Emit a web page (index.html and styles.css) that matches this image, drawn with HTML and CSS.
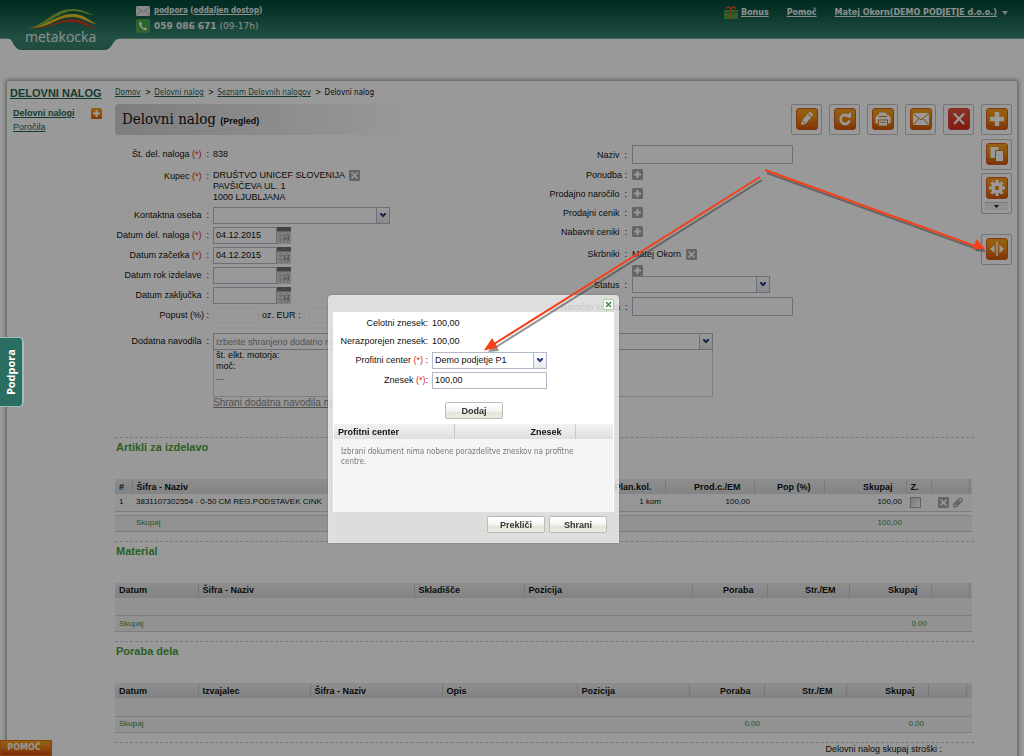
FILE: index.html
```html
<!DOCTYPE html>
<html lang="sl">
<head>
<meta charset="utf-8">
<title>Metakocka - Delovni nalog</title>
<meta name="viewport" content="width=device-width, initial-scale=1">
<link rel="stylesheet" href="styles.css">
</head>
<body>
<svg class="defs" aria-hidden="true">
  <defs>
    <linearGradient id="orange" x1="0" y1="0" x2="0" y2="1"><stop offset="0" stop-color="#f7a51c"/><stop offset=".5" stop-color="#f08a14"/><stop offset="1" stop-color="#d2560c"/></linearGradient>
    <linearGradient id="red" x1="0" y1="0" x2="0" y2="1"><stop offset="0" stop-color="#e85438"/><stop offset="1" stop-color="#d92e1c"/></linearGradient>
    <linearGradient id="tab" x1="0" y1="0" x2="0" y2="1"><stop offset="0" stop-color="#3b8672"/><stop offset="1" stop-color="#36806c"/></linearGradient>
    <symbol id="tile" viewBox="0 0 22 22"><rect x=".5" y=".5" width="21" height="21" rx="2.5" fill="url(#orange)" stroke="#dd5a1e"/></symbol>
    <symbol id="plus-s" viewBox="0 0 11 11"><rect width="11" height="11" rx="1.5" fill="#a8a8a8"/><path d="M5.500 2v7M2 5.500h7" stroke="#fff" stroke-width="2.200"/></symbol>
    <symbol id="cross-s" viewBox="0 0 11 11"><rect width="11" height="11" rx="1" fill="#a8a8a8"/><path d="M2.500 2.500l6 6M8.500 2.500l-6 6" stroke="#fff" stroke-width="1.600"/></symbol>
    <symbol id="caret" viewBox="0 0 8 6"><path d="M1 0.500l1.500 0 1.500 1.500 1.500-1.500H7v1.500L4 5 1 2z" fill="#2c3f80"/></symbol>
    <symbol id="cal" viewBox="0 0 14 17"><rect width="14" height="17" fill="#d4d4d4"/><rect width="14" height="4" fill="#6f7472"/><path d="M0 4.500h14" stroke="#aaa"/><path d="M1 8.500h12M1 12.500h12M3.500 6v10M10.500 6v10" stroke="#b8bcba"/><path d="M7.500 8v6M7.500 11.500h4M11.500 8v6" stroke="#8f9392"/></symbol>
  </defs>
</svg>

<div class="app">
  <header class="top">
    <a class="logo" href="#" aria-label="metakocka">
      <svg class="logo-art" viewBox="0 0 120 52" aria-hidden="true">
        <path d="M6 38c6 1 6 4 8 7s4 5 8 5h82c4 0 6-2 8-5s3-6 9-7z" fill="url(#tab)"/>
        <path d="M26 28C43 28 52 9 72 9c12 0 17 5 23 6-8 0-12-4-22-4C56 12 46 28 26 28z" fill="#86b43c"/>
        <path d="M26 28c17 1 30-14 46-14 13 0 17 7 25 10-10-1-14-7-25-7-16 0-25 13-46 11z" fill="#efc91f"/>
        <path d="M26 28c20 2 32-9 46-9 12 0 17 7 25 10-10-1-15-7-26-7-15 0-27 9-45 6z" fill="#c63d24"/>
      </svg>
      <span class="logo-name">metakocka</span>
    </a>
    <div class="contact">
      <svg viewBox="0 0 14 10" width="14" height="10" aria-hidden="true"><rect width="14" height="10" rx="1" fill="#e6e8e7"/><path d="M0 1l7 5 7-5M0 9.500l5-5M14 9.500l-5-5" fill="none" stroke="#aab0ae"/></svg>
      <span><a href="#">podpora</a> (<a href="#">oddaljen dostop</a>)</span>
      <svg viewBox="0 0 14 14" width="14" height="14" aria-hidden="true"><rect width="14" height="14" rx="2" fill="#4ea64a"/><path d="M4 2.500C2.500 4 3 7 5.500 9s4.500 3 6 1.500L9.500 8.300 8 9.300C6.800 8.600 5.800 7.600 5.200 6.200L6.300 5z" fill="#fff"/></svg>
      <span class="phone"><b>059 086 671</b> <span class="hours">(09-17h)</span></span>
    </div>
    <nav class="account">
      <a class="gift" href="#"><svg viewBox="0 0 14 14" width="14" height="14" aria-hidden="true"><rect x="0" y="4" width="14" height="9" fill="#4f9e48"/><path d="M0 6.500h14" stroke="#3a7d38"/><path d="M7 4v9" stroke="#d4512e" stroke-width="2"/><path d="M7 4C5-1 2 1 3 3M7 4c2-5 5-3 4-1" fill="none" stroke="#d4512e" stroke-width="1.500"/></svg><span>Bonus</span></a>
      <a href="#"><span>Pomoč</span></a>
      <a href="#"><span>Matej Okorn(DEMO PODJETJE d.o.o.)</span><svg viewBox="0 0 6 4" width="6" height="4" aria-hidden="true"><path d="M0 0h6L3 4z" fill="#c9d6d2"/></svg></a>
    </nav>
  </header>

  <div class="panel">
    <aside class="side">
      <a class="side-title" href="#">DELOVNI NALOG</a>
      <div class="side-row"><a href="#"><b>Delovni nalogi</b></a>
        <button class="bare" aria-label="Dodaj nalog"><svg viewBox="0 0 11 11" width="11" height="11"><rect width="11" height="11" rx="1.500" fill="url(#orange)"/><path d="M5.500 2v7M2 5.500h7" stroke="#fff" stroke-width="2"/></svg></button></div>
      <div class="side-row"><a href="#">Poročila</a></div>
    </aside>

    <main class="main">
      <nav class="crumbs"><a href="#">Domov</a> &gt; <a href="#">Delovni nalog</a> &gt; <a href="#">Seznam Delovnih nalogov</a> &gt; <span>Delovni nalog</span></nav>
      <div class="title-row">
        <h1>Delovni nalog <small>(Pregled)</small></h1>
        <div class="tools">
          <button class="tool" aria-label="Uredi"><svg viewBox="0 0 22 22"><use href="#tile"/><path d="M5 17l1.200-4.800L13 4.500q1-1 2.200 0l1.300 1.200q1 1 0 2L9.800 15.800z" fill="#fff"/><path d="M12 6l3.500 3.300M6.500 12.500l3 3" stroke="#d9761c"/></svg></button>
          <button class="tool" aria-label="Osveži"><svg viewBox="0 0 22 22"><use href="#tile"/><path d="M14.500 8.200A4.600 4.600 0 1 0 15.600 12.500" fill="none" stroke="#fff" stroke-width="2.600"/><path d="M11 8.500L17 10V4z" fill="#fff"/></svg></button>
          <button class="tool" aria-label="Natisni"><svg viewBox="0 0 22 22"><use href="#tile"/><path d="M7 8V4.500h6l2 2V8z" fill="#fff"/><path d="M3.500 9.500l2-2.500h11l2 2.500v6h-15z" fill="#fff"/><path d="M7 8.500h8" stroke="#dc7518"/><rect x="6.500" y="12" width="9" height="6" fill="#fff" stroke="#dc7518"/><path d="M8 14.500h6" stroke="#dc7518" stroke-width=".8"/></svg></button>
          <button class="tool" aria-label="Pošlji"><svg viewBox="0 0 22 22"><use href="#tile"/><rect x="3" y="5" width="16" height="12" fill="#fff"/><path d="M3 5.500l8 6.500 8-6.500M3.500 16.500l5.500-6M18.500 16.500l-5.500-6" fill="none" stroke="#dc7518"/></svg></button>
          <button class="tool" aria-label="Izbriši"><svg viewBox="0 0 22 22"><rect x=".5" y=".5" width="21" height="21" rx="2.500" fill="url(#red)" stroke="#e03c50"/><path d="M6 5.500l10 10.500M16 5.500L6 16" stroke="#fff" stroke-width="2.200"/></svg></button>
        </div>
      </div>

      <form class="form">
        <div class="cols">
          <div class="rows">
            <div class="row"><span class="label">Št. del. naloga <i>(*)</i> &nbsp;:</span><span>838</span></div>
            <div class="row party"><span class="label">Kupec <i>(*)</i> &nbsp;:</span>
              <span class="address">DRUŠTVO UNICEF SLOVENIJA<br>PAVŠIČEVA UL. 1<br>1000 LJUBLJANA</span>
              <button type="button" class="bare" aria-label="Odstrani kupca"><svg width="11" height="11"><use href="#cross-s"/></svg></button></div>
            <div class="row"><label for="contact">Kontaktna oseba &nbsp;:</label><span class="combo contact-field"><select id="contact"><option></option></select><svg><use href="#caret"/></svg></span></div>
            <div class="row"><label for="d1">Datum del. naloga <i>(*)</i> &nbsp;:</label><span class="date"><input id="d1" type="text" value="04.12.2015"><svg><use href="#cal"/></svg></span></div>
            <div class="row"><label for="d2">Datum začetka <i>(*)</i> &nbsp;:</label><span class="date"><input id="d2" type="text" value="04.12.2015"><svg><use href="#cal"/></svg></span></div>
            <div class="row"><label for="d3">Datum rok izdelave &nbsp;:</label><span class="date"><input id="d3" type="text"><svg><use href="#cal"/></svg></span></div>
            <div class="row"><label for="d4">Datum zaključka &nbsp;:</label><span class="date"><input id="d4" type="text"><svg><use href="#cal"/></svg></span></div>
            <div class="row"><label for="pop">Popust (%) :</label><input class="faint" id="pop" type="text"><label class="inline" for="eur">oz. EUR :</label><input class="faint" id="eur" type="text"></div>
          </div>
          <div class="rows right">
            <div class="row tall"><label for="naziv">Naziv &nbsp;:</label><input class="wide" id="naziv" type="text"></div>
            <div class="row"><span class="label">Ponudba :</span><button type="button" class="bare" aria-label="Dodaj ponudbo"><svg width="11" height="11"><use href="#plus-s"/></svg></button></div>
            <div class="row"><span class="label">Prodajno naročilo &nbsp;:</span><button type="button" class="bare" aria-label="Dodaj prodajno naročilo"><svg width="11" height="11"><use href="#plus-s"/></svg></button></div>
            <div class="row"><span class="label">Prodajni cenik &nbsp;:</span><button type="button" class="bare" aria-label="Dodaj prodajni cenik"><svg width="11" height="11"><use href="#plus-s"/></svg></button></div>
            <div class="row"><span class="label">Nabavni ceniki &nbsp;:</span><button type="button" class="bare" aria-label="Dodaj nabavni cenik"><svg width="11" height="11"><use href="#plus-s"/></svg></button></div>
            <div class="row keeper"><span class="label">Skrbniki &nbsp;:</span><span>Matej Okorn</span><button type="button" class="bare" aria-label="Odstrani skrbnika"><svg width="11" height="11"><use href="#cross-s"/></svg></button></div>
            <div class="row more"><span class="label"></span><button type="button" class="bare" aria-label="Dodaj skrbnika"><svg width="11" height="11"><use href="#plus-s"/></svg></button></div>
            <div class="row status"><label for="status">Status &nbsp;:</label><span class="combo status-field"><select id="status"><option></option></select><svg><use href="#caret"/></svg></span></div>
            <div class="row tall order"><label for="order">Naročilo kupca</label><span>:</span><input class="wide" id="order" type="text"></div>
          </div>
        </div>
        <div class="row notes"><label for="saved">Dodatna navodila &nbsp;:</label>
          <div class="notes-box">
            <span class="combo"><select id="saved" class="hint"><option>Izberite shranjeno dodatno navodilo</option></select><svg><use href="#caret"/></svg></span>
            <textarea aria-label="Dodatna navodila">št. elkt. motorja:
moč:
...</textarea>
            <a class="save-note" href="#">Shrani dodatna navodila med shranjene</a>
          </div></div>
      </form>

      <section class="block">
        <h2>Artikli za izdelavo</h2>
        <table>
          <colgroup><col class="w17"><col><col class="w89"><col class="w89"><col class="w70"><col class="w82"><col class="w25"><col class="w38"><col class="w3"></colgroup>
          <thead><tr><th>#</th><th>Šifra - Naziv</th><th class="num">Plan.kol.</th><th class="num">Prod.c./EM</th><th class="num">Pop (%)</th><th class="num">Skupaj</th><th>Z.</th><th></th><th></th></tr></thead>
          <tbody><tr class="item"><td>1</td><td>3831107302554 - 0-50 CM REG.PODSTAVEK CINK</td><td class="num">1 kom</td><td class="num">100,00</td><td></td><td class="num">100,00</td><td><input class="tick" type="checkbox" aria-label="Z."></td><td><span class="acts"><button class="bare" aria-label="Odstrani"><svg width="11" height="11"><use href="#cross-s"/></svg></button><button class="bare" aria-label="Priponka"><svg width="11" height="11" viewBox="0 0 11 11"><path d="M2 7l5-5q1.500-1.300 2.700-.2T9.500 4.500L4.500 9.500Q3 10.500 2 9.500T2 7.500L6.500 3.200M3.800 8L8 4" fill="none" stroke="#999" stroke-width="1.100"/></svg></button></span></td><td></td></tr>
          <tr class="gap"><td colspan="9"></td></tr></tbody>
          <tfoot><tr><td></td><td>Skupaj</td><td></td><td></td><td></td><td class="num">100,00</td><td></td><td></td><td></td></tr></tfoot>
        </table>
      </section>

      <section class="block">
        <h2>Material</h2>
        <table>
          <colgroup><col class="w83"><col><col class="w110"><col class="w168"><col class="w75"><col class="w82"><col class="w82"><col class="w38"><col class="w3"></colgroup>
          <thead><tr><th>Datum</th><th>Šifra - Naziv</th><th>Skladišče</th><th>Pozicija</th><th class="num">Poraba</th><th class="num">Str./EM</th><th class="num">Skupaj</th><th></th><th></th></tr></thead>
          <tbody><tr class="empty"><td colspan="9"></td></tr></tbody>
          <tfoot><tr><td>Skupaj</td><td></td><td></td><td></td><td></td><td></td><td class="num">0.00</td><td></td><td></td></tr></tfoot>
        </table>
      </section>

      <section class="block">
        <h2>Poraba dela</h2>
        <table>
          <colgroup><col class="w83"><col class="w112"><col><col class="w135"><col class="w112"><col class="w75"><col class="w82"><col class="w82"><col class="w38"><col class="w6"></colgroup>
          <thead><tr><th>Datum</th><th>Izvajalec</th><th>Šifra - Naziv</th><th>Opis</th><th>Pozicija</th><th class="num">Poraba</th><th class="num">Str./EM</th><th class="num">Skupaj</th><th></th><th></th></tr></thead>
          <tbody><tr class="empty"><td colspan="10"></td></tr></tbody>
          <tfoot><tr><td>Skupaj</td><td></td><td></td><td></td><td></td><td class="num">0.00</td><td></td><td class="num">0.00</td><td></td><td></td></tr></tfoot>
        </table>
      </section>
      <p class="total">Delovni nalog skupaj stroški :</p>
    </main>

    <div class="rail">
      <button class="tool" aria-label="Dodaj"><svg viewBox="0 0 22 22"><use href="#tile"/><path d="M11 4v14M4 11h14" stroke="#fff" stroke-width="4.400"/></svg></button>
      <button class="tool" aria-label="Kopiraj"><svg viewBox="0 0 22 22"><use href="#tile"/><rect x="4.500" y="4" width="8" height="11" fill="#fff"/><rect x="9.500" y="7.500" width="8" height="11" fill="#fff" stroke="#dc7518"/></svg></button>
      <button class="tool menu" aria-label="Nastavitve"><svg viewBox="0 0 22 22"><use href="#tile"/><circle cx="11" cy="11" r="4" fill="none" stroke="#fff" stroke-width="3.600"/><path d="M11 3v3M11 16v3M3 11h3M16 11h3M5.400 5.400l2 2M14.600 14.600l2 2M16.600 5.400l-2 2M7.400 14.600l-2 2" stroke="#fff" stroke-width="3"/></svg><span class="drop"><svg viewBox="0 0 5 3"><path d="M0 0h5L2.500 3z" fill="#222"/></svg></span></button>
      <button class="tool split" aria-label="Razdeli"><svg viewBox="0 0 22 22"><use href="#tile"/><path d="M11 4v14" stroke="#fff" stroke-width="1.500"/><path d="M4 11l4.500-4v8zM18 11l-4.500-4v8z" fill="#fff"/></svg></button>
    </div>
  </div>
  <button class="help">POMOČ</button>
</div>

<div class="shade"></div>
<button class="support">Podpora</button>

<div class="dialog" role="dialog" aria-label="Profitni centri">
  <div class="dialog-head"><button class="close" aria-label="Zapri"><svg viewBox="0 0 7 7" width="7" height="7"><path d="M1 1l5 5M6 1L1 6" stroke="#3f8a3c" stroke-width="1.500"/></svg></button></div>
  <div class="dialog-body">
    <div class="drow"><span class="label">Celotni znesek:</span><span>100,00</span></div>
    <div class="drow"><span class="label">Nerazporejen znesek:</span><span>100,00</span></div>
    <div class="drow field"><label for="pc">Profitni center <i>(*)</i> :</label><span class="combo"><select id="pc"><option>Demo podjetje P1</option></select><svg><use href="#caret"/></svg></span></div>
    <div class="drow field"><label for="amount">Znesek <i>(*)</i>:</label><input id="amount" type="text" value="100,00"></div>
    <button class="btn add">Dodaj</button>
    <table class="split-table">
      <colgroup><col class="w120"><col><col class="w38"></colgroup>
      <thead><tr><th>Profitni center</th><th class="num">Znesek</th><th></th></tr></thead>
      <tbody><tr><td colspan="3">Izbrani dokument nima nobene porazdelitve zneskov na profitne centre.</td></tr></tbody>
    </table>
  </div>
  <div class="dialog-foot"><button class="btn">Prekliči</button><button class="btn">Shrani</button></div>
</div>

<svg class="pointers" viewBox="0 0 1024 756" aria-hidden="true">
  <g class="pointer-shadow"><path d="M762 180L496 347M767 173L977 249"/><path class="tip" d="M488 352l7-9 4 8zM986 252l-11-1 4-8z"/></g>
  <g class="pointer"><path d="M760 177L494 344M765 170L975 246"/><path class="tip" d="M486 349l6-9 4 7zM983 248l-9 0 3-7z"/></g>
</svg>
</body>
</html>
```
FILE: styles.css
```css
* { box-sizing: border-box; }
body {
  margin: 0;
  font: 9px/12px "Liberation Sans", Arial, sans-serif;
  color: #111;
  background: #fff;
}
button, input, select, textarea { font: inherit; color: inherit; margin: 0; }
button { cursor: pointer; }
i { font-style: normal; color: #d22; }
a { color: #1f6450; }
.defs { position: absolute; width: 0; height: 0; }
.app { height: 100vh; overflow: hidden; position: relative; }
.bare { border: 0; background: none; padding: 0; display: flex; }

/* top bar */
.top {
  display: flex;
  align-items: flex-start;
  height: 39px;
  background: linear-gradient(#004a3a, #08503f 20%, #3b8672);
  border-bottom: 1px solid #7aa699;
  color: #e6efec;
}
.top a { color: #e6efec; }
.logo { display: grid; width: 120px; height: 52px; flex: none; text-decoration: none; }
.logo-art { grid-area: 1 / 1; width: 120px; height: 52px; }
.logo-name {
  grid-area: 1 / 1;
  padding: 28px 0 0 25px;
  font: 14px/18px "Open Sans", sans-serif;
}
.contact {
  display: grid;
  grid-template-columns: 14px auto;
  gap: 1px 4px;
  align-items: center;
  padding: 4px 0 0 16px;
  font: bold 8px/14px "DejaVu Sans Condensed", Tahoma, sans-serif;
}
.phone { font: 9px/14px "DejaVu Sans", Verdana, sans-serif; }
.account {
  display: flex;
  gap: 18px;
  margin-left: auto;
  padding: 6px 16px 0 0;
  font: bold 8px/14px "DejaVu Sans", Verdana, sans-serif;
}
.account a { display: flex; gap: 3px; align-items: center; text-decoration: none; }
.account a:last-child { gap: 5px; }
.account span { text-decoration: underline; }

/* page panel */
.panel {
  display: grid;
  grid-template-columns: 98px minmax(0, 1fr) 31px;
  column-gap: 7px;
  margin: 41px 6px 0;
  padding: 6px 5px 20px 3px;
  border: 1px solid #b4c8b0;
  box-shadow: 0 0 4px #888;
}
.side-title { display: block; font-size: 11px; line-height: 12px; font-weight: bold; }
.side-row { display: flex; justify-content: space-between; padding: 0 6px 0 3px; height: 14px; align-items: center; }
.side-title + .side-row { margin-top: 7px; }
.crumbs { font: 8px/12px "DejaVu Sans Condensed", Tahoma, sans-serif; margin-bottom: 5px; }
.crumbs a { margin-right: 2px; }
.crumbs a + a, .crumbs span { margin-left: 1px; }
.title-row { display: flex; align-items: center; justify-content: space-between; }
h1 {
  width: 300px;
  margin: 0;
  padding-left: 7px;
  font: 15px/31px "DejaVu Serif Condensed", "Liberation Serif", serif;
  background: linear-gradient(90deg, #d2d2d2, #fff);
  border-radius: 4px;
}
h1 small { font: bold 9px "Liberation Sans", sans-serif; }
.tools { display: flex; gap: 7px; }
.tool {
  width: 31px;
  height: 31px;
  padding: 3px;
  border: 1px solid #c4c4c4;
  border-radius: 2px;
  background: #fff;
  display: flex;
  flex-direction: column;
  align-items: center;
}
.tool > svg { width: 22px; height: 22px; flex: none; }
.rail { display: flex; flex-direction: column; gap: 3px; padding-top: 17px; }
.rail .tool:first-child { margin-bottom: 1px; }
.menu { height: 41px; }
.drop { align-self: stretch; border-top: 1px solid #ccc; margin-top: 3px; background: #f0f0ee; flex: 1; display: flex; justify-content: center; align-items: center; }
.drop svg { width: 5px; height: 3px; }
.split { margin-top: 17px; }

/* form */
.form { padding-top: 9px; }
.cols { display: grid; grid-template-columns: 418px minmax(0, 1fr); }
.row { display: grid; grid-template-columns: 94px auto auto auto; justify-content: start; align-items: center; column-gap: 4px; height: 20px; }
.right .row { grid-template-columns: 94px auto auto; height: 19px; column-gap: 5px; }
.right .tall { height: 21px; }
.right .keeper { height: 22px; margin-top: 2px; }
.right .more { height: 5px; }
.right .status { height: 23px; margin-top: 3px; }
.row label, .row .label { text-align: right; white-space: nowrap; }
.row .inline { text-align: left; margin: 0 4px 0 -1px; }
.right .order { grid-template-columns: 87px 2px auto; }
.party { height: 41px; align-items: start; padding-top: 6px; }
.address { line-height: 11px; }
.form input[type="text"], .form textarea {
  height: 17px;
  padding: 0 2px;
  border: 1px solid #b5b8c8;
  border-radius: 0;
  background: #fff;
}
.form input.wide { width: 161px; height: 19px; }
.form input.faint { width: 46px; height: 15px; border-color: #f3f3f3; }
.combo { display: grid; grid-template-columns: minmax(0, 1fr) 13px; height: 17px; border: 1px solid #b5b8c8; background: #fff; }
.combo select {
  grid-area: 1 / 1 / 2 / 3;
  appearance: none;
  border: 0;
  border-radius: 0;
  padding: 0 15px 0 2px;
  background: none;
}
.combo svg {
  grid-area: 1 / 2;
  width: 13px;
  height: 15px;
  padding: 4px 2px;
  background: linear-gradient(#fff, #e6e8ec);
  border-left: 1px solid #b5b8c8;
  pointer-events: none;
}
.contact-field { width: 177px; }
.status-field { width: 138px; }
.date { display: flex; }
.date input { width: 64px; }
.date svg { width: 14px; height: 17px; }
.combo .hint { color: #888; }
.notes { height: auto; align-items: start; margin-top: 8px; grid-template-columns: 94px minmax(0, 500px); }
.notes label { line-height: 17px; }
.notes-box { display: flex; flex-direction: column; align-items: stretch; }
.form .notes textarea { height: 47px; resize: none; line-height: 11px; border-color: #cfd1d6; border-top: 0; }
.save-note { color: #888; align-self: flex-start; font-size: 10px; }

/* data tables */
.block { border-top: 1px dashed #c4cfc6; padding-bottom: 9px; }
.form + .block { margin-top: 28px; }
h2 { margin: 0; padding: 2px 0 25px 1px; font-size: 11px; line-height: 14px; color: #46a03a; }
table { width: 100%; table-layout: fixed; border-collapse: collapse; border-spacing: 0; }
.block table { width: calc(100% - 2px); }
th {
  height: 15px;
  padding: 0 4px;
  text-align: left;
  line-height: 14px;
  background: linear-gradient(#ececec, #dadbdd);
  border-right: 1px solid #c8c8c8;
}
th:last-child { border-right: 0; }
th.num { text-align: right; padding-right: 13px; }
td { padding: 0 4px; font-size: 8px; line-height: 10px; white-space: nowrap; }
td.num { text-align: right; }
.item td { height: 17px; border-bottom: 1px solid #d0d0d0; background: #fafafa; }
.gap td { height: 4px; }
.empty td { height: 18px; background: #f4f4f4; }
tfoot td { height: 16px; color: #3f8f45; background: #f4f4f4; border-top: 1px solid #d4d4d4; border-bottom: 1px solid #d0d0d0; }
.tick { appearance: none; display: block; width: 11px; height: 11px; border: 1px solid #a4a4a4; background: linear-gradient(135deg, #ccc, #fff); }
.acts { display: flex; gap: 3px; justify-content: center; }
.w3 { width: 3px; } .w6 { width: 6px; } .w17 { width: 17px; } .w25 { width: 25px; } .w38 { width: 38px; }
.w70 { width: 70px; } .w75 { width: 75px; } .w82 { width: 82px; } .w83 { width: 83px; } .w89 { width: 89px; }
.w110 { width: 110px; } .w112 { width: 112px; } .w120 { width: 120px; } .w135 { width: 135px; } .w168 { width: 168px; }
.total { margin: 0; padding-right: 32px; text-align: right; border-top: 1px dashed #c4cfc6; }

.help {
  position: absolute;
  left: 0;
  bottom: 0;
  width: 52px;
  height: 16px;
  padding: 0 4px 0 0;
  border: 1px solid #e07018;
  background: linear-gradient(#f7a51c, #e87414 60%, #cc4408);
  color: #fff;
  font: bold 8px/14px "DejaVu Sans", sans-serif;
}

/* layers above the page */
.shade { position: fixed; inset: 0; background: rgba(0, 0, 0, .4); }
.support {
  position: fixed;
  left: 0;
  top: 337px;
  width: 24px;
  height: 70px;
  padding: 0;
  border: 1px solid #9fc0ba;
  border-left: 0;
  border-right-width: 2px;
  border-radius: 0 5px 5px 0;
  background: #2a6e62;
  color: #fff;
  writing-mode: sideways-lr;
  font: bold 11px/22px "Open Sans", sans-serif;
}
.dialog {
  position: fixed;
  left: 328px;
  top: 295px;
  width: 291px;
  padding: 0 4px;
  border: 1px solid rgba(225, 225, 225, .8);
  border-radius: 4px 4px 0 0;
  background: rgba(237, 237, 237, .82);
  box-shadow: 0 0 2px rgba(0, 0, 0, .3);
}
.dialog-head { display: flex; justify-content: flex-end; align-items: center; height: 16px; }
.close { width: 11px; height: 11px; padding: 1px; border: 1px solid #a9cfa6; border-radius: 2px; background: #fff; display: flex; }
.dialog-body { background: #fff; padding: 2px 1px 0; display: flex; flex-direction: column; }
.drow { display: grid; grid-template-columns: 94px 115px; column-gap: 4px; align-items: center; height: 18px; }
.field { height: 20px; }
.drow label, .drow .label { text-align: right; }
.drow input { width: 100%; height: 17px; padding: 0 2px; border: 1px solid #b5b8c8; }
.btn {
  width: 58px;
  height: 17px;
  padding: 0;
  border: 1px solid #bbb;
  border-radius: 2px;
  background: linear-gradient(#fff, #f4f4f2 55%, #dfe6d6 60%, #e8ede2);
  color: #333;
  font-weight: bold;
}
.add { margin: 12px 0 5px 111px; }
.split-table th { height: 15px; background: linear-gradient(#f2f2f2, #dedfe1); }
.split-table td { height: 73px; padding: 8px 30px 0 7px; vertical-align: top; white-space: normal; background: #f5f5f5; color: #777; font: 8px/10px "DejaVu Sans Condensed", Tahoma, sans-serif; }
.dialog-foot { display: flex; justify-content: flex-end; gap: 4px; padding: 4px 7px 9px 0; }

.pointers { position: fixed; left: 0; top: 0; width: 1024px; height: 756px; pointer-events: none; }
.pointer { fill: none; stroke: #f5401a; stroke-width: 2; }
.pointer .tip { fill: #f5401a; }
.pointer-shadow { fill: none; stroke: rgba(60, 60, 60, .55); stroke-width: 2; }
.pointer-shadow .tip { fill: rgba(60, 60, 60, .55); stroke: none; }
```
